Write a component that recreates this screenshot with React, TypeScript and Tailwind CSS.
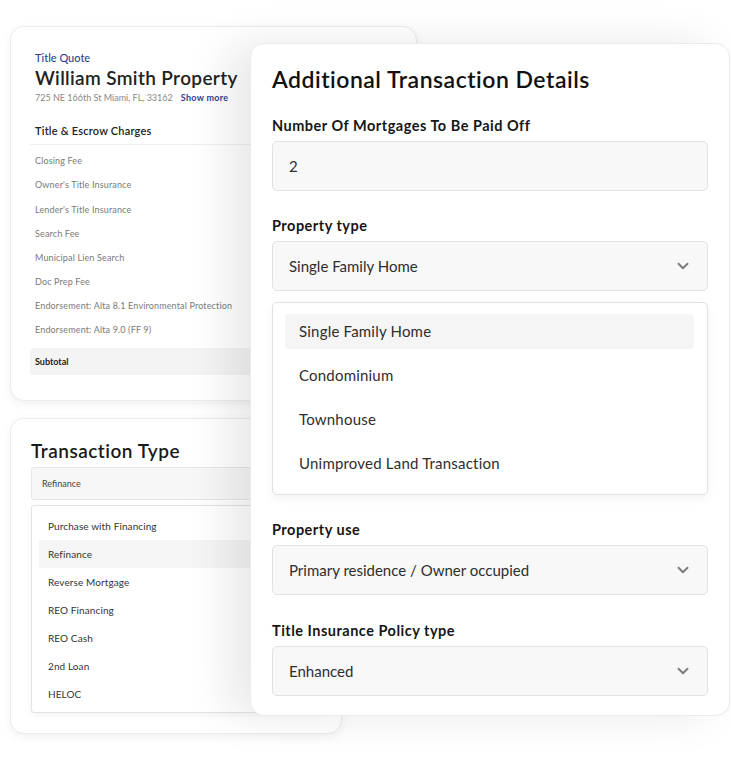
import { ChevronDown } from "lucide-react";

const charges = [
  "Closing Fee",
  "Owner's Title Insurance",
  "Lender's Title Insurance",
  "Search Fee",
  "Municipal Lien Search",
  "Doc Prep Fee",
  "Endorsement: Alta 8.1 Environmental Protection",
  "Endorsement: Alta 9.0 (FF 9)",
];

const transactionTypes = [
  "Purchase with Financing",
  "Refinance",
  "Reverse Mortgage",
  "REO Financing",
  "REO Cash",
  "2nd Loan",
  "HELOC",
];

const propertyTypes = ["Single Family Home", "Condominium", "Townhouse", "Unimproved Land Transaction"];

function Select({ value }: { value: string }) {
  return (
    <div className="flex h-[50px] items-center justify-between rounded-[5px] border border-[#e2e2e2] bg-[#f8f8f8] pl-4 pr-[15px] text-[15px] text-[#2e2e2e]">
      <span>{value}</span>
      <ChevronDown size={18} strokeWidth={2.6} className="text-[#7d7d7d]" />
    </div>
  );
}

function Label({ children }: { children: string }) {
  return (
    <div className="mb-[5px] text-[14.5px] font-bold leading-[20px] tracking-[0.5px] text-[#161616]">
      {children}
    </div>
  );
}

export default function App() {
  return (
    <div
      className="relative h-[780px] w-[731px] overflow-hidden bg-white"
      style={{ fontFamily: "Lato, 'Open Sans', sans-serif" }}
    >
      {/* quote card */}
      <div className="absolute left-[10px] top-[26px] h-[375px] w-[407px] rounded-[14px] border border-[#ececec] bg-white px-[19px] pt-[24px] shadow-[0_3px_10px_rgba(0,0,0,0.06)]">
        <div className="px-[5px]">
          <div className="text-[11px] font-medium leading-[14px] text-[#2f3f8f]">Title Quote</div>
          <div className="mt-[1px] text-[19px] font-semibold leading-[24px] tracking-[0.35px] text-[#222]">
            William Smith Property
          </div>
          <div className="mt-[2px] flex gap-[8px] text-[9px] leading-[12px] text-[#888]">
            <span>725 NE 166th St Miami, FL, 33162</span>
            <span className="font-bold tracking-[0.3px] text-[#2f3f8f]">Show more</span>
          </div>
          <div className="mt-[20px] pb-[6px] text-[11px] font-semibold leading-[14px] tracking-[0.2px] text-[#222]">
            Title &amp; Escrow Charges
          </div>
        </div>
        <div className="border-t border-[#efefef] pt-[4px]">
          {charges.map((c) => (
            <div
              key={c}
              className="flex h-[24.15px] items-center px-[5px] text-[9px] tracking-[0.15px] text-[#7a7a7a]"
            >
              {c}
            </div>
          ))}
          <div className="mt-[6px] flex h-[27px] items-center rounded-[4px] bg-[#f4f4f4] px-[5px] text-[9px] font-bold text-[#222]">
            Subtotal
          </div>
        </div>
      </div>

      {/* transaction type card */}
      <div className="absolute left-[10px] top-[418px] h-[316px] w-[332px] rounded-[14px] border border-[#ececec] bg-white px-[20px] pt-[20px] shadow-[0_3px_10px_rgba(0,0,0,0.06)]">
        <div className="text-[19px] font-semibold leading-[24px] tracking-[0.5px] text-[#1a1a1a]">Transaction Type</div>
        <div className="mt-[4px] flex h-[33px] items-center rounded-[3px] border border-[#e6e6e6] bg-[#f7f7f7] px-[10px] text-[9px] text-[#444]">
          Refinance
        </div>
        <div className="mt-[5px] rounded-[3px] border border-[#e3e3e3] bg-white px-[7px] pb-[4px] pt-[6px] shadow-[0_2px_6px_rgba(0,0,0,0.05)]">
          {transactionTypes.map((t) => (
            <div
              key={t}
              className={`flex h-[28px] items-center px-[9px] text-[10px] tracking-[0.1px] text-[#333] ${
                t === "Refinance" ? "bg-[#f5f5f5]" : ""
              }`}
            >
              {t}
            </div>
          ))}
        </div>
      </div>

      {/* details card */}
      <div className="absolute left-[250px] top-[43px] h-[673px] w-[480px] rounded-[14px] border border-[#ebebeb] bg-white px-[21px] pt-[20px] shadow-[-22px_0_45px_rgba(0,0,0,0.09)]">
        <div className="text-[23px] font-semibold leading-[30px] tracking-[0.5px] text-[#111]">
          Additional Transaction Details
        </div>

        <div className="mt-[22px]">
          <Label>Number Of Mortgages To Be Paid Off</Label>
          <div className="flex h-[50px] items-center rounded-[5px] border border-[#e2e2e2] bg-[#f8f8f8] px-4 text-[15px] text-[#2e2e2e]">
            2
          </div>
        </div>

        <div className="mt-[25px]">
          <Label>Property type</Label>
          <Select value="Single Family Home" />
          <div className="mt-[11px] rounded-[5px] border border-[#e2e2e2] bg-white pb-[13px] pl-[12px] pr-[13px] pt-[11px] shadow-[0_4px_10px_rgba(0,0,0,0.05)]">
            {propertyTypes.map((p, i) => (
              <div
                key={p}
                className={`flex h-[35px] items-center rounded-[4px] px-[14px] text-[15px] tracking-[0.2px] text-[#2e2e2e] ${
                  i === 0 ? "bg-[#f5f5f5]" : ""
                } ${i > 0 ? "mt-[9px]" : ""}`}
              >
                {p}
              </div>
            ))}
          </div>
        </div>

        <div className="mt-[25px]">
          <Label>Property use</Label>
          <Select value="Primary residence / Owner occupied" />
        </div>

        <div className="mt-[26px]">
          <Label>Title Insurance Policy type</Label>
          <Select value="Enhanced" />
        </div>
      </div>
    </div>
  );
}
